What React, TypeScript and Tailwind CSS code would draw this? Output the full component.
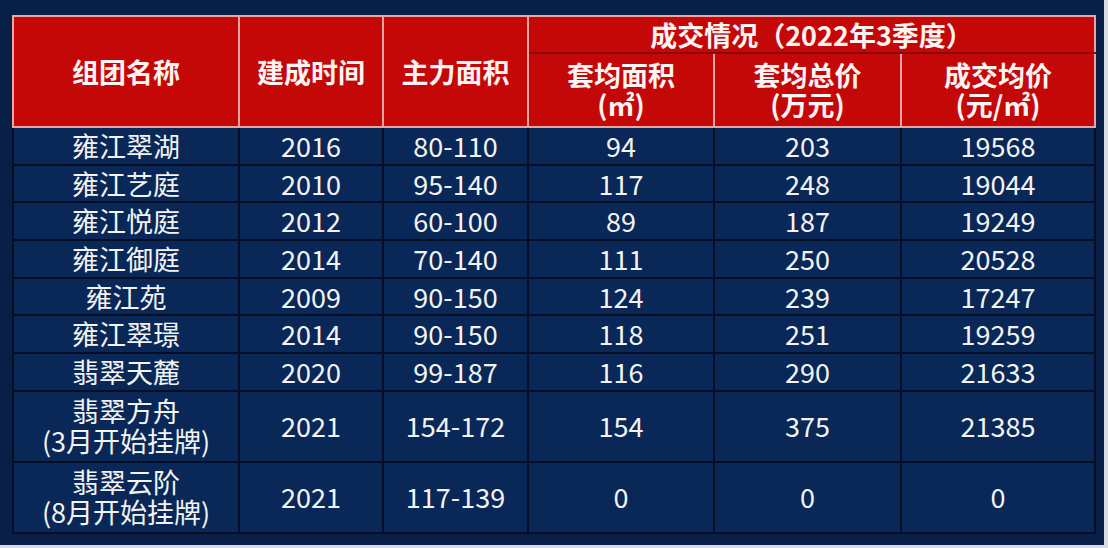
const rows: { name: string[]; year: string; area: string; avgArea: string; avgTotal: string; avgPrice: string }[] = [
  { name: ['雍江翠湖'], year: '2016', area: '80-110', avgArea: '94', avgTotal: '203', avgPrice: '19568' },
  { name: ['雍江艺庭'], year: '2010', area: '95-140', avgArea: '117', avgTotal: '248', avgPrice: '19044' },
  { name: ['雍江悦庭'], year: '2012', area: '60-100', avgArea: '89', avgTotal: '187', avgPrice: '19249' },
  { name: ['雍江御庭'], year: '2014', area: '70-140', avgArea: '111', avgTotal: '250', avgPrice: '20528' },
  { name: ['雍江苑'], year: '2009', area: '90-150', avgArea: '124', avgTotal: '239', avgPrice: '17247' },
  { name: ['雍江翠璟'], year: '2014', area: '90-150', avgArea: '118', avgTotal: '251', avgPrice: '19259' },
  { name: ['翡翠天麓'], year: '2020', area: '99-187', avgArea: '116', avgTotal: '290', avgPrice: '21633' },
  { name: ['翡翠方舟', '(3月开始挂牌)'], year: '2021', area: '154-172', avgArea: '154', avgTotal: '375', avgPrice: '21385' },
  { name: ['翡翠云阶', '(8月开始挂牌)'], year: '2021', area: '117-139', avgArea: '0', avgTotal: '0', avgPrice: '0' },
];

const th = 'border-2 border-[#f0a3a3] bg-[#c40808] text-center align-middle font-bold text-[#fff4f4] p-0';
const td = 'border-2 border-[#050e22] bg-[#0a2857] text-center align-middle p-0';

export default function App() {
  return (
    <div className="w-[1108px] h-[548px] bg-[#d9dbe0]">
      <div
        className="w-[1104px] h-[545px] bg-[#082047] pt-[15px] pl-[12px]"
        style={{ fontFamily: '"Noto Sans CJK SC", "Noto Sans", sans-serif' }}
      >
        <table className="border-collapse table-fixed w-[1082px] text-[27px] leading-[30px] text-[#f3f3f3]">
          <colgroup>
            <col className="w-[226px]" />
            <col className="w-[144px]" />
            <col className="w-[145px]" />
            <col className="w-[186px]" />
            <col className="w-[187px]" />
            <col className="w-[194px]" />
          </colgroup>
          <thead>
            <tr className="h-[37px]">
              <th rowSpan={2} className={th}>组团名称</th>
              <th rowSpan={2} className={th}>建成时间</th>
              <th rowSpan={2} className={th}>主力面积</th>
              <th colSpan={3} className={`${th} !border-b-[#8a0a0a]`}>成交情况（2022年3季度）</th>
            </tr>
            <tr className="h-[74px]">
              <th className={th}>
                <div>套均面积</div>
                <div>(㎡)</div>
              </th>
              <th className={th}>
                <div>套均总价</div>
                <div>(万元)</div>
              </th>
              <th className={th}>
                <div>成交均价</div>
                <div>(元/㎡)</div>
              </th>
            </tr>
          </thead>
          <tbody>
            {rows.map((r) => (
              <tr key={r.name[0]} className={r.name.length > 1 ? 'h-[71px]' : 'h-[37.7px]'}>
                <td className={td}>
                  {r.name.map((n) => (
                    <div key={n}>{n}</div>
                  ))}
                </td>
                <td className={td}>{r.year}</td>
                <td className={td}>{r.area}</td>
                <td className={td}>{r.avgArea}</td>
                <td className={td}>{r.avgTotal}</td>
                <td className={td}>{r.avgPrice}</td>
              </tr>
            ))}
          </tbody>
        </table>
      </div>
    </div>
  );
}
